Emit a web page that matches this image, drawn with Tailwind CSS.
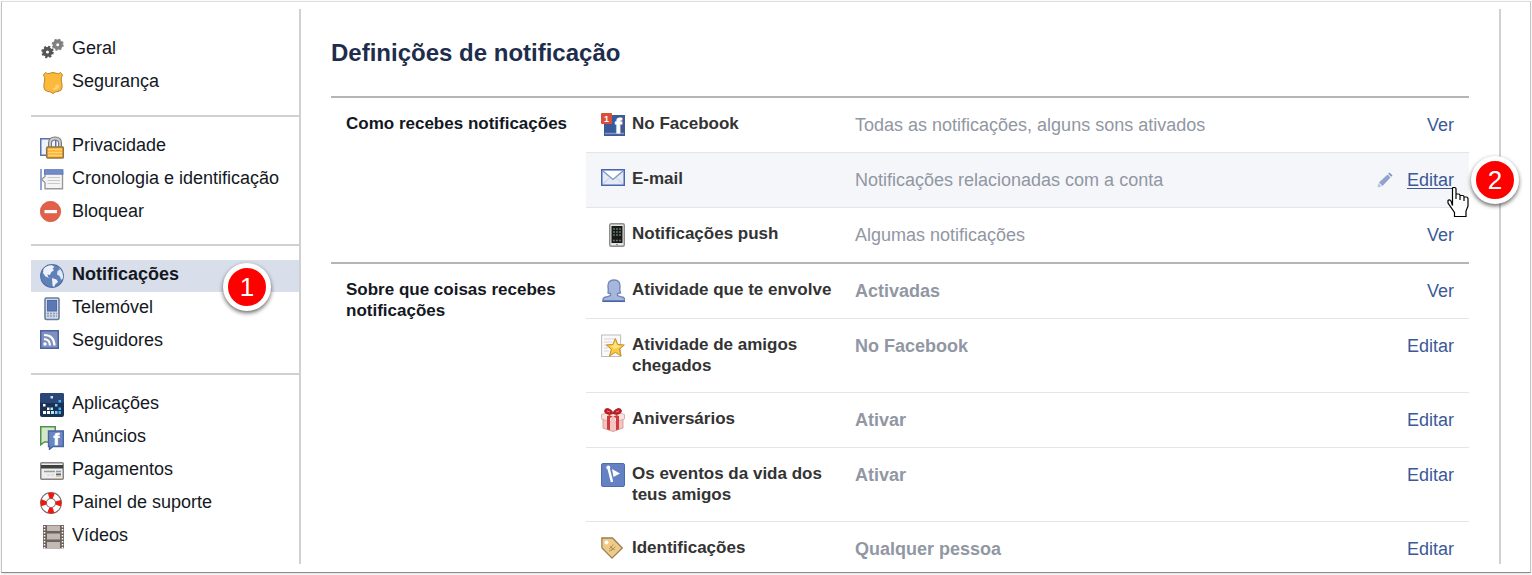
<!DOCTYPE html>
<html lang="pt">

<head>
    <meta charset="UTF-8">
    <meta name="viewport" content="width=device-width, initial-scale=1.0">
    <title>Definições de notificação</title>
    <script src="https://cdn.jsdelivr.net/npm/@tailwindcss/browser@4"></script>
</head>

<body class="flex min-h-screen bg-white pt-px pr-px pb-[2px] pl-px font-['Liberation_Sans',Arial,sans-serif] text-[18px] text-[#141823]">
    <div class="flex flex-1 border border-[#c4c4c4] border-t-[#dedede] border-b-[#8a8a8a] bg-white pt-[7px] pr-[29px] pb-2 pl-[29px] shadow-sm">

        <!-- Sidebar -->
        <nav class="w-[270px] shrink-0 border-r-2 border-[#d0d0d0] pt-[25px]">
            <ul class="pb-[15px]">
                <li class="mb-px">
                    <a href="#" class="flex items-start gap-2 pb-1 pl-[9px] leading-7">
                        <svg class="-mb-1 mt-1 size-6" viewBox="0 0 24 24" fill="none">
                            <circle cx="7.5" cy="14" r="5" stroke="#555" stroke-width="2.5" stroke-dasharray="2 1.93" />
                            <circle cx="7.5" cy="14" r="3.3" stroke="#555" stroke-width="3.6" />
                            <circle cx="17.7" cy="6.7" r="4.8" stroke="#858585" stroke-width="2.5" stroke-dasharray="2 1.77" />
                            <circle cx="17.7" cy="6.7" r="3.3" stroke="#808080" stroke-width="3.6" />
                        </svg>
                        Geral
                    </a>
                </li>
                <li class="mb-px">
                    <a href="#" class="flex items-start gap-2 pb-1 pl-[9px] leading-7">
                        <svg class="-mb-1 mt-1 size-6" viewBox="0 0 24 24">
                            <path d="M5.5 1.5Q7.5 3.8 10 2.2Q13 .8 16 2.2Q18.5 3.8 20.5 1.5L22.5 3.8Q20.8 6.5 21.3 10Q22.5 13 22 17Q21.5 20 18 20.5Q15 20.5 13 22.5Q11 20.5 8 20.5Q4.5 20 4 17Q3.5 13 4.7 10Q5.2 6.5 3.5 3.8Z" fill="#fdb93a" stroke="#b9872e" />
                            <path d="M19 13.5Q20 18 14 19L12.5 17.5Q16 17 15.5 14Z" fill="#fdd486" />
                        </svg>
                        Segurança
                    </a>
                </li>
            </ul>
            <ul class="border-t-2 border-[#d0d0d0] py-[14px]">
                <li class="mb-px">
                    <a href="#" class="flex items-start gap-2 pb-1 pl-[9px] leading-7">
                        <svg class="-mb-1 mt-1 size-6" viewBox="0 0 24 24">
                            <rect x=".75" y="3.75" width="15" height="16.5" fill="#edf2fb" stroke="#5673b5" stroke-width="1.5" />
                            <path d="M10 13V8Q10 3.5 15 3.5Q20 3.5 20 8V13" fill="none" stroke="#777" stroke-width="4" />
                            <path d="M10 13V8Q10 3.5 15 3.5Q20 3.5 20 8V13" fill="none" stroke="#ccc" stroke-width="1.8" />
                            <rect x="6.7" y="12" width="16.6" height="11" rx="1" fill="#fdb93a" stroke="#927145" stroke-width="1.5" />
                            <path d="M8 14.5H22M8 17.5H22M8 20.5H22" stroke="#ffd37c" />
                        </svg>
                        Privacidade
                    </a>
                </li>
                <li class="mb-px">
                    <a href="#" class="flex items-start gap-2 pb-1 pl-[9px] leading-7">
                        <svg class="-mb-1 mt-1 size-6" viewBox="0 0 24 24">
                            <path d="M1 1V22" stroke="#6f88c4" stroke-width="1.5" />
                            <path d="M5 5V8.5L1.5 11.5L5 14.5V20.7H22.5V5Z" fill="#f4f4f4" stroke="#999" stroke-width="1.4" />
                            <rect x="4.5" y="1.7" width="18.5" height="4.5" fill="#728bcc" stroke="#526fb3" stroke-width=".8" />
                            <path d="M7.5 9.5H20M7.5 12.5H20M7.5 15.5H20" stroke="#c9c9c9" stroke-width="1.2" />
                        </svg>
                        Cronologia e identificação
                    </a>
                </li>
                <li class="mb-px">
                    <a href="#" class="flex items-start gap-2 pb-1 pl-[9px] leading-7">
                        <svg class="-mb-1 mt-1 size-6" viewBox="0 0 24 24">
                            <circle cx="10.5" cy="10.5" r="10.2" fill="#e2604a" stroke="#cf513e" stroke-width=".7" />
                            <rect x="4.5" y="9" width="12.5" height="3.2" fill="#fff" />
                        </svg>
                        Bloquear
                    </a>
                </li>
            </ul>
            <ul class="border-t-2 border-[#d0d0d0] py-[14px]">
                <li class="relative mb-px">
                    <a href="#" aria-current="page" class="flex items-start gap-2 bg-[#d8deea] pb-1 pl-[9px] font-bold leading-7">
                        <svg class="-mb-1 mt-1 size-6" viewBox="0 0 24 24">
                            <circle cx="12" cy="12" r="11.3" fill="#6080b8" stroke="#5270a8" stroke-width="1.2" />
                            <path d="M3.5 5Q7 1 12 1.3L14.5 3L12.5 4.5L14 6L11 8.5L10 11L7.5 10.5L8 13L10.5 14.5L5.5 12.5L3 9Z" fill="#edf2fa" />
                            <path d="M12 14L16.5 15.5L18 18L15.5 20L14 23L12.5 21.5Z" fill="#edf2fa" />
                            <path d="M18 3Q23.5 7 23 14L21.5 16L19.5 12L17 10.5L17.5 7L20 5.5Z" fill="#e1e9f5" />
                        </svg>
                        Notificações
                    </a>
                    <span class="absolute top-[3px] right-7 flex size-12 items-center justify-center rounded-full border-[5px] border-white bg-[#fe0000] text-[26px] leading-none text-white shadow-[0_2px_4px_rgba(0,0,0,0.6)]">1</span>
                </li>
                <li class="mb-px">
                    <a href="#" class="flex items-start gap-2 pb-1 pl-[9px] leading-7">
                        <svg class="-mb-1 mt-1 size-6" viewBox="0 0 24 24">
                            <rect x="5" y="1" width="14" height="21.5" rx="1.5" fill="#d1d9e6" stroke="#697e9f" stroke-width="1.6" />
                            <rect x="7.5" y="3.5" width="9" height="10.5" fill="#5c78b5" stroke="#4f6aa5" />
                            <path d="M7 16.5H17M7 19H17" stroke="#8a9bb8" stroke-width="1.3" stroke-dasharray="2 1" />
                        </svg>
                        Telemóvel
                    </a>
                </li>
                <li class="mb-px">
                    <a href="#" class="flex items-start gap-2 pb-1 pl-[9px] leading-7">
                        <svg class="-mb-1 mt-1 size-6" viewBox="0 0 24 24" fill="none">
                            <rect x=".75" y=".75" width="17.5" height="17.5" fill="#8090bf" stroke="#4a62a2" stroke-width="1.5" />
                            <path d="M4 9Q10 9.5 10 15.5M4 5Q14 5 14.5 15.5" stroke="#fff" stroke-width="2.2" />
                            <circle cx="5" cy="14" r="1.7" fill="#fff" />
                        </svg>
                        Seguidores
                    </a>
                </li>
            </ul>
            <ul class="border-t-2 border-[#d0d0d0] pt-[14px]">
                <li class="mb-px">
                    <a href="#" class="flex items-start gap-2 pb-1 pl-[9px] leading-7">
                        <svg class="-mb-1 mt-1 size-6" viewBox="0 0 24 24">
                            <rect width="24" height="24" rx="2" fill="#1c3054" />
                            <rect width="24" height="10" rx="2" fill="#294677" />
                            <path d="M3 18h3v3H3zM7 18h3v3H7zM3 11h2.5v2.5H3zM7 14.5h2.5V17H7z" fill="#fff" />
                            <path d="M11 18h3v3h-3zM10.5 14.5H13V17h-2.5zM10.5 3H13v2.5h-2.5z" fill="#b3e8fb" />
                            <path d="M15 18h2.5v3H15zM15 11h2.5v2.5H15z" fill="#77d2f5" />
                            <path d="M18.5 18H21v3h-2.5zM18.5 14.5H21V17h-2.5zM18.5 7H21v2.5h-2.5z" fill="#38b5eb" />
                        </svg>
                        Aplicações
                    </a>
                </li>
                <li class="mb-px">
                    <a href="#" class="flex items-start gap-2 pb-1 pl-[9px] leading-7">
                        <svg class="-mb-1 mt-1 size-6" viewBox="0 0 24 24">
                            <path d="M.75.75H15.25V16H4.5L.75 18.8Z" fill="#d4e7ca" stroke="#549345" stroke-width="1.5" />
                            <path d="M8.5 5H23.3V20.5H13L9.5 23.3V20.5H8.5Z" fill="#6b85bf" stroke="#4765a4" stroke-width="1.4" />
                            <text x="13.5" y="19" font-size="17" font-weight="bold" fill="#fff" stroke="#fff" stroke-width=".7">f</text>
                        </svg>
                        Anúncios
                    </a>
                </li>
                <li class="mb-px">
                    <a href="#" class="flex items-start gap-2 pb-1 pl-[9px] leading-7">
                        <svg class="-mb-1 mt-1 size-6" viewBox="0 0 24 24">
                            <rect x=".75" y="3.75" width="22.5" height="16.5" rx="1" fill="#ededeb" stroke="#858585" stroke-width="1.5" />
                            <rect x="1" y="6" width="22" height="3.5" fill="#3f3f3f" />
                            <path d="M4 12.5H15M16 12.5H21" stroke="#999" stroke-width="1.5" />
                            <path d="M7 16H14" stroke="#ccc" stroke-dasharray="3 1" />
                            <rect x="16" y="14.5" width="5" height="1.7" fill="#3366cb" />
                            <rect x="16" y="16.2" width="5" height="1.5" fill="#f5b32f" />
                        </svg>
                        Pagamentos
                    </a>
                </li>
                <li class="mb-px">
                    <a href="#" class="flex items-start gap-2 pb-1 pl-[9px] leading-7">
                        <svg class="-mb-1 mt-1 size-6" viewBox="0 0 24 24" fill="none">
                            <circle cx="11" cy="11" r="7.5" stroke="#756860" stroke-width="7" />
                            <circle cx="11" cy="11" r="7.5" stroke="#fff" stroke-width="5" />
                            <circle cx="11" cy="11" r="7.5" stroke="#f3160e" stroke-width="5.5" stroke-dasharray="5.2 6.58" stroke-dashoffset="2.6" />
                        </svg>
                        Painel de suporte
                    </a>
                </li>
                <li>
                    <a href="#" class="flex items-start gap-2 pb-1 pl-[9px] leading-7">
                        <svg class="-mb-1 mt-1 size-6" viewBox="0 0 24 24">
                            <rect x="3" y="0" width="21" height="23.5" fill="#6d625d" />
                            <path d="M7 .5H20V6H7ZM7 8.5H20V14.5H7ZM7 17H20V23.5H7Z" fill="#c2b8b4" />
                            <path d="M4.5 1V23.5M22.5 1V23.5" stroke="#fff" stroke-width="1.5" stroke-dasharray="1.5 1.5" />
                        </svg>
                        Vídeos
                    </a>
                </li>
            </ul>
        </nav>

        <!-- Settings -->
        <main class="flex-1 border-r-2 border-[#d0d0d0] pt-7 pr-[30px] pl-[30px]">
            <h1 class="mb-[27px] text-[24px] leading-8 font-bold text-[#1e2d4c]">Definições de notificação</h1>

            <table class="w-full border-separate border-spacing-0 text-left">
                <tbody class="align-top">
                    <tr>
                        <th rowspan="3" scope="rowgroup" class="w-[255px] border-t-2 border-[#b5b5b5] py-[15px] pl-[15px] text-[17px] leading-[21px]">Como recebes notificações</th>
                        <th scope="row" class="w-[269px] border-t-2 border-[#b5b5b5] px-[15px] py-[15px] text-[17px] leading-[21px] text-[#333]">
                            <div class="flex items-start gap-[7px]">
                                <svg class="size-6 shrink-0" viewBox="0 0 24 24">
                                    <rect x="3" y="2" width="21" height="21" fill="#3c5a99" />
                                    <path d="M4 20.5H23" stroke="#8297c2" stroke-width="1.5" />
                                    <text x="14" y="20" font-size="20" font-weight="bold" fill="#fff" stroke="#fff">f</text>
                                    <rect width="11" height="11" rx="1" fill="#d9503a" />
                                    <text x="3" y="9" font-size="9" font-weight="bold" fill="#fff">1</text>
                                </svg>
                                No Facebook
                            </div>
                        </th>
                        <td class="border-t-2 border-[#b5b5b5] py-[15px] leading-6 text-[#9197a3]">Todas as notificações, alguns sons ativados</td>
                        <td class="border-t-2 border-[#b5b5b5] py-[15px] pr-[15px] text-right leading-6"><a href="#" class="text-[#3b5998] hover:underline">Ver</a></td>
                    </tr>
                    <tr class="bg-[#f5f6f9]">
                        <th scope="row" class="border-t border-[#e5e5e8] px-[15px] py-[15px] text-[17px] leading-[21px] text-[#333]">
                            <div class="flex items-start gap-[7px]">
                                <svg class="size-6 shrink-0" viewBox="0 0 24 24">
                                    <rect x=".75" y="1.75" width="22.5" height="15.5" fill="#e3e9f5" stroke="#4766b0" stroke-width="1.5" />
                                    <path d="M2 3L12 11.5L22 3" fill="#fff" stroke="#7d93c4" stroke-width="1.3" />
                                    <path d="M2 16L9 9.5M22 16L15 9.5" stroke="#c0cce4" />
                                </svg>
                                E-mail
                            </div>
                        </th>
                        <td class="border-t border-[#e5e5e8] py-[15px] leading-6 text-[#9197a3]">Notificações relacionadas com a conta</td>
                        <td class="relative border-t border-[#e5e5e8] py-[15px] pr-[15px] leading-6">
                            <a href="#" class="flex items-start justify-end gap-[14px] text-[#3b5998]">
                                <svg class="mt-1 size-4" viewBox="0 0 16 16">
                                    <path d="M.5 15.5L1.5 11L4.5 14.5Z" fill="#b8c3dc" />
                                    <path d="M2 10.5L10.5 2.5L13.5 5.5L5.5 14Z" fill="#91a2cc" />
                                    <path d="M11.2 1.8L12.5.5L15.5 3.5L14.2 4.8Z" fill="#8193c0" />
                                </svg>
                                <span class="underline underline-offset-2">Editar</span>
                            </a>
                            <!-- Pointer -->
                            <svg class="absolute top-[33px] right-0 h-8 w-6" viewBox="-1 0 24 32">
                                <path d="M6.5 19.5V2.5Q6.5 1.5 7.5 1.5H8.5Q10 1.5 10 2.5V13V8H12.5Q14 8 14 9.5V14V9.5H16.5Q18 9.5 18 11V15V11H20Q22 11 22 13V20L20 25V30.5H8.5V26.5L2 17V14.5Q3.5 13 5 15Z" fill="#fff" stroke="#000" stroke-width="1.2" />
                            </svg>
                            <span class="absolute top-[3px] -right-[50px] flex size-12 items-center justify-center rounded-full border-[5px] border-white bg-[#fe0000] text-[26px] leading-none text-white shadow-[0_2px_4px_rgba(0,0,0,0.6)]">2</span>
                        </td>
                    </tr>
                    <tr>
                        <th scope="row" class="border-t border-[#e5e5e8] px-[15px] py-[15px] text-[17px] leading-[21px] text-[#333]">
                            <div class="flex items-start gap-[7px]">
                                <svg class="size-6 shrink-0" viewBox="0 0 24 24">
                                    <rect x="8.7" y=".7" width="14.6" height="22.6" rx="1.5" fill="#e5e5e3" stroke="#8c8c8c" stroke-width="1.4" />
                                    <rect x="10.5" y="3" width="11" height="17" fill="#191919" />
                                    <path d="M12 6H20.5M12 9H20.5M12 12H20.5M12 17.5H20.5" stroke="#5f7769" stroke-width="1.5" stroke-dasharray="2 1" />
                                    <circle cx="16" cy="21.7" r=".9" fill="#888" />
                                </svg>
                                Notificações push
                            </div>
                        </th>
                        <td class="border-t border-[#e5e5e8] py-[15px] leading-6 text-[#9197a3]">Algumas notificações</td>
                        <td class="border-t border-[#e5e5e8] py-[15px] pr-[15px] text-right leading-6"><a href="#" class="text-[#3b5998] hover:underline">Ver</a></td>
                    </tr>
                </tbody>
                <tbody class="align-top">
                    <tr>
                        <th rowspan="5" scope="rowgroup" class="border-t-2 border-[#b5b5b5] py-[15px] pl-[15px] text-[17px] leading-[21px]">Sobre que coisas recebes notificações</th>
                        <th scope="row" class="border-t-2 border-[#b5b5b5] py-[15px] pl-[15px] text-[17px] leading-[21px] text-[#333]">
                            <div class="flex items-start gap-[7px]">
                                <svg class="size-6 shrink-0" viewBox="0 0 24 24">
                                    <path d="M2 22Q1.5 18.5 5 18L9.5 16.5V14.5L7 14Q7.5 11 7 8Q6.5 1 13 .8Q19.5 1 19 8Q18.5 11 19.5 14L16.5 14.5V16.5L21 18Q24 18.5 24 22Z" fill="#a7b7dc" stroke="#6d84b7" stroke-width="1.3" />
                                    <path d="M1.5 22.3H24" stroke="#4b68a5" stroke-width="1.5" />
                                </svg>
                                <span class="whitespace-nowrap">Atividade que te envolve</span>
                            </div>
                        </th>
                        <td class="border-t-2 border-[#b5b5b5] py-[15px] leading-6 font-bold text-[#9197a3]">Activadas</td>
                        <td class="border-t-2 border-[#b5b5b5] py-[15px] pr-[15px] text-right leading-6"><a href="#" class="text-[#3b5998] hover:underline">Ver</a></td>
                    </tr>
                    <tr>
                        <th scope="row" class="border-t border-[#e5e5e8] px-[15px] pt-[15px] pb-4 text-[17px] leading-[21px] text-[#333]">
                            <div class="flex items-start gap-[7px]">
                                <svg class="size-6 shrink-0" viewBox="0 0 24 24">
                                    <rect x=".6" y="1" width="19" height="21.5" fill="#fafafa" stroke="#bbb" />
                                    <path d="M3 5H14M3 8H11M3 11H9M3 14H7M3 17H8" stroke="#d5d5d5" />
                                    <path d="M14.3 4.5L16.8 10.5L23.3 11L18.3 15.2L20.2 22L14.3 18.3L8.5 22L10.3 15.2L5.3 11L11.8 10.5Z" fill="#fccb3d" stroke="#c58b2b" stroke-linejoin="round" />
                                    <path d="M14.3 7.5L16 11.5L20 12L14 15L9 12L12.5 11.5Z" fill="#fee388" />
                                </svg>
                                Atividade de amigos chegados
                            </div>
                        </th>
                        <td class="border-t border-[#e5e5e8] py-[15px] leading-6 font-bold text-[#9197a3]">No Facebook</td>
                        <td class="border-t border-[#e5e5e8] py-[15px] pr-[15px] text-right leading-6"><a href="#" class="text-[#3b5998] hover:underline">Editar</a></td>
                    </tr>
                    <tr>
                        <th scope="row" class="border-t border-[#e5e5e8] px-[15px] py-[15px] text-[17px] leading-[21px] text-[#333]">
                            <div class="flex items-start gap-[7px]">
                                <svg class="size-6 shrink-0" viewBox="0 0 24 24">
                                    <path d="M2 10L12 14L22 10V20L12 23.5L2 20Z" fill="#f3c6c4" stroke="#cf8d8c" stroke-width=".8" />
                                    <path d="M.5 6.5L12 3L23.5 6.5V11L12 14.5L.5 11Z" fill="#fae2df" stroke="#d9a09e" stroke-width=".8" />
                                    <path d="M4.5 5.5L8 4.5L18 8V21.3L15 22.3V10ZM19.5 5.5L16 4.5L6 8V21.3L9 22.3V10Z" fill="#cf3b3d" />
                                    <path d="M10 10L12 8.5L14 10V22L12 22.8L10 22Z" fill="#f3c6c4" />
                                    <path d="M12 5.5Q4 6.5 3.5 3.5Q3.5 0 7 .5Q11 1.5 12 5.5Q13 1.5 17 .5Q20.5 0 20.5 3.5Q20 6.5 12 5.5Z" fill="#c81e24" stroke="#991e21" stroke-width=".8" />
                                    <path d="M6 3L9 4M18 3L15 4" stroke="#ed7674" />
                                </svg>
                                Aniversários
                            </div>
                        </th>
                        <td class="border-t border-[#e5e5e8] py-[15px] leading-6 font-bold text-[#9197a3]">Ativar</td>
                        <td class="border-t border-[#e5e5e8] py-[15px] pr-[15px] text-right leading-6"><a href="#" class="text-[#3b5998] hover:underline">Editar</a></td>
                    </tr>
                    <tr>
                        <th scope="row" class="border-t border-[#e5e5e8] px-[15px] pt-[15px] pb-4 text-[17px] leading-[21px] text-[#333]">
                            <div class="flex items-start gap-[7px]">
                                <svg class="size-6 shrink-0" viewBox="0 0 24 24">
                                    <rect x=".5" y=".5" width="23" height="23" rx="1.5" fill="#6481c4" stroke="#4c6cb1" />
                                    <path d="M7.5 5L11 19" stroke="#fff" stroke-width="2.5" />
                                    <circle cx="7.3" cy="4.5" r="2" fill="#fff" />
                                    <path d="M11 6L19 10.5L12.5 14Z" fill="#fff" />
                                </svg>
                                Os eventos da vida dos teus amigos
                            </div>
                        </th>
                        <td class="border-t border-[#e5e5e8] py-[15px] leading-6 font-bold text-[#9197a3]">Ativar</td>
                        <td class="border-t border-[#e5e5e8] py-[15px] pr-[15px] text-right leading-6"><a href="#" class="text-[#3b5998] hover:underline">Editar</a></td>
                    </tr>
                    <tr>
                        <th scope="row" class="border-t border-[#e5e5e8] px-[15px] pt-[15px] text-[17px] leading-[21px] text-[#333]">
                            <div class="flex items-start gap-[7px]">
                                <svg class="size-6 shrink-0" viewBox="0 0 24 24">
                                    <path d="M.8.8L11.5 1L21.3 11L11 21.2L1 11Z" fill="#efcb89" stroke="#9c8055" stroke-width="1.3" />
                                    <circle cx="5.5" cy="5.5" r="2" fill="#fff" />
                                    <path d="M8 12L12.5 7.5M10 14L14.5 9.5M9 9.5L14 13M8 14.5L12 11" stroke="#b08f59" />
                                </svg>
                                Identificações
                            </div>
                        </th>
                        <td class="border-t border-[#e5e5e8] pt-[15px] leading-6 font-bold text-[#9197a3]">Qualquer pessoa</td>
                        <td class="border-t border-[#e5e5e8] pt-[15px] pr-[15px] text-right leading-6"><a href="#" class="text-[#3b5998] hover:underline">Editar</a></td>
                    </tr>
                </tbody>
            </table>
        </main>
    </div>
</body>

</html>
